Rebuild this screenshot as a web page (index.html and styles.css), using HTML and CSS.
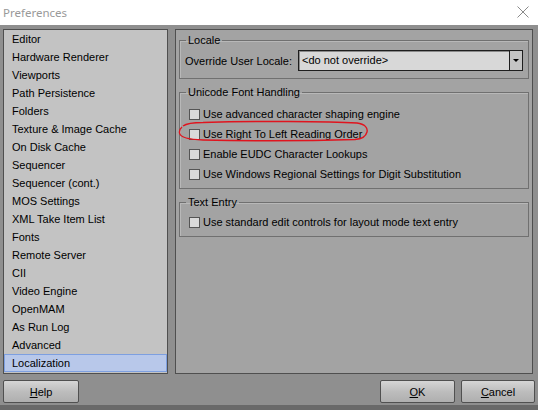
FILE: index.html
```html
<!DOCTYPE html>
<html>
<head>
<meta charset="utf-8">
<link rel="stylesheet" href="styles.css">
</head>
<body>
<div class="window">
  <div class="titlebar">
    <span class="title">Preferences</span>
    <svg class="close" width="12" height="12" viewBox="0 0 12 12"><path d="M0.5 0.5L11.5 11.5M11.5 0.5L0.5 11.5" stroke="#8a8a8a" stroke-width="1" fill="none"/></svg>
  </div>
  <div class="body">
    <div class="main">
      <ul class="list">
        <li>Editor</li>
        <li>Hardware Renderer</li>
        <li>Viewports</li>
        <li>Path Persistence</li>
        <li>Folders</li>
        <li>Texture &amp; Image Cache</li>
        <li>On Disk Cache</li>
        <li>Sequencer</li>
        <li>Sequencer (cont.)</li>
        <li>MOS Settings</li>
        <li>XML Take Item List</li>
        <li>Fonts</li>
        <li>Remote Server</li>
        <li>CII</li>
        <li>Video Engine</li>
        <li>OpenMAM</li>
        <li>As Run Log</li>
        <li>Advanced</li>
        <li class="selected">Localization</li>
      </ul>
      <div class="panel">
        <fieldset class="group group-locale">
          <legend>Locale</legend>
          <div class="locale-row">
            <span class="locale-label">Override User Locale:</span>
            <div class="dropdown">
              <span class="dropdown-value">&lt;do not override&gt;</span>
              <span class="dropdown-btn"><span class="tri"></span></span>
            </div>
          </div>
        </fieldset>
        <fieldset class="group group-unicode">
          <legend>Unicode Font Handling</legend>
          <div class="check"><span class="box"></span><span>Use advanced character shaping engine</span></div>
          <div class="check"><span class="box"></span><span>Use Right To Left Reading Order</span></div>
          <div class="check"><span class="box"></span><span>Enable EUDC Character Lookups</span></div>
          <div class="check"><span class="box"></span><span>Use Windows Regional Settings for Digit Substitution</span></div>
          <svg class="circle" width="194" height="24" viewBox="0 0 194 24"><path d="M6 7 C 10 4, 18 3.5, 26 3.5 C 80 2, 150 2, 180 4 C 188 5, 191 9, 190 13 C 189 17, 185 20, 178 20.5 C 130 22, 70 22, 26 21 C 12 20.5, 3 18, 2.5 14 C 2.2 11.5, 3 9.5, 5 8" stroke="#e0141e" stroke-width="1.4" fill="none"/></svg>
        </fieldset>
        <fieldset class="group group-text">
          <legend>Text Entry</legend>
          <div class="check"><span class="box"></span><span>Use standard edit controls for layout mode text entry</span></div>
        </fieldset>
      </div>
    </div>
    <div class="buttons">
      <button class="btn btn-help"><u>H</u>elp</button>
      <span class="spacer"></span>
      <button class="btn btn-ok"><u>O</u>K</button>
      <button class="btn btn-cancel"><u>C</u>ancel</button>
    </div>
  </div>
  <div class="strip"></div>
</div>
</body>
</html>
```

FILE: styles.css
```css
* { box-sizing: border-box; }
html, body { margin: 0; padding: 0; }
body {
  width: 538px;
  height: 410px;
  overflow: hidden;
  font-family: "Liberation Sans", Arial, sans-serif;
  font-size: 11px;
  color: #000;
}
.window {
  width: 538px;
  height: 410px;
  display: flex;
  flex-direction: column;
  background: #8f8f8f;
}
.titlebar {
  height: 25px;
  background: #fff;
  display: flex;
  align-items: center;
  padding: 0 9px 1px 3px;
}
.title {
  font-family: "Noto Sans", "Open Sans", sans-serif;
  font-size: 11.5px;
  color: #999;
  flex: 1;
}
.close { display: block; }
.body {
  flex: 1;
  display: flex;
  flex-direction: column;
  padding: 4px 3px 0 3px;
}
.main {
  display: flex;
  gap: 7px;
  height: 345px;
}
.list {
  margin: 0;
  padding: 0;
  list-style: none;
  width: 165px;
  background: #c3c3c3;
  border: 1px solid #4f4f4f;
}
.list li {
  height: 18px;
  line-height: 18px;
  padding-left: 8px;
}
.list li.selected {
  background: #b8c8ea;
  border: 1px solid #7d9fe0;
  line-height: 16px;
  padding-left: 7px;
}
.panel {
  width: 358px;
  background: #a3a3a3;
  border: 1px solid #4f4f4f;
  padding: 3px 3px 0 3px;
}
.group {
  margin: 0 0 6px 0;
  border: 1px solid #707070;
  box-shadow: inset 1px 1px 0 #b8b8b8;
  padding: 0 5px;
  min-width: 0;
}
.group legend {
  padding: 0 2px;
  margin-left: 1px;
  line-height: 14px;
  height: 14px;
}
.group-locale { padding-top: 3px; padding-bottom: 7px; }
.group-unicode { padding-top: 5px; padding-bottom: 4px; position: relative; }
.group-text { padding-top: 3px; padding-bottom: 4px; }
.locale-row {
  display: flex;
  align-items: center;
  height: 21px;
}
.locale-label { width: 113px; flex: none; }
.dropdown {
  flex: 1;
  height: 21px;
  display: flex;
  border: 1px solid #1e1e1e;
  background: #d8d8d8;
  box-shadow: inset 1px 1px 0 #8a8a8a;
}
.dropdown-value {
  flex: 1;
  padding-left: 3px;
  line-height: 19px;
}
.dropdown-btn {
  width: 13px;
  border-left: 1px solid #1e1e1e;
  background: #c4c4c4;
  display: flex;
  align-items: center;
  justify-content: center;
}
.tri {
  width: 0; height: 0;
  border-left: 3px solid transparent;
  border-right: 3px solid transparent;
  border-top: 3px solid #000;
}
.check {
  display: flex;
  align-items: center;
  height: 20px;
  padding-left: 4px;
  gap: 3px;
}
.box {
  width: 11px;
  height: 11px;
  border: 1px solid #555;
  background: #dadada;
  flex: none;
}
.circle {
  position: absolute;
  left: -3px;
  top: 20px;
}
.buttons {
  display: flex;
  gap: 6px;
  margin-top: 6px;
  height: 23px;
}
.spacer { flex: 1; }
.btn {
  font-family: "Liberation Sans", Arial, sans-serif;
  font-size: 11px;
  color: #000;
  height: 23px;
  border: 1px solid #505050;
  border-radius: 2px;
  background: linear-gradient(#d6d6d6, #bdbdbd 50%, #afafaf);
  padding: 0;
}
.btn-help { width: 76px; }
.btn-ok { width: 75px; }
.btn-cancel { width: 74px; }
.strip {
  height: 5px;
  background: #696969;
}
```
